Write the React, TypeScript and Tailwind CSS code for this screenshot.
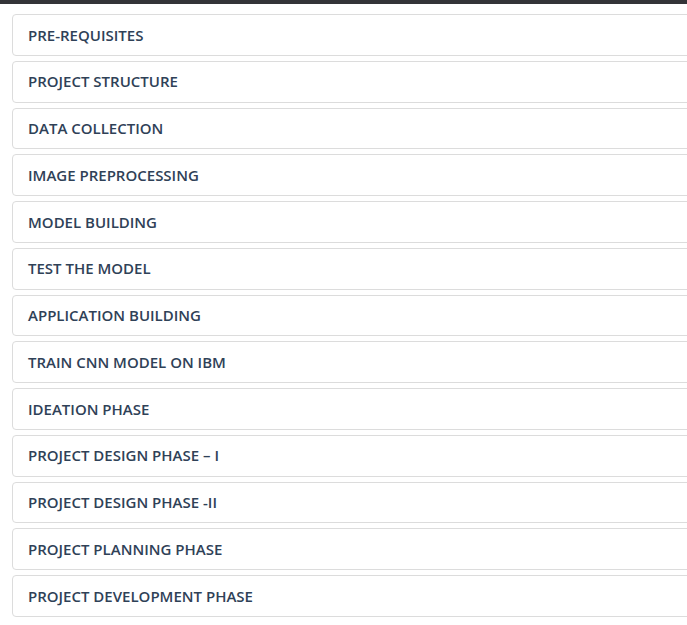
import React from 'react';

const sections = [
  'PRE-REQUISITES',
  'PROJECT STRUCTURE',
  'DATA COLLECTION',
  'IMAGE PREPROCESSING',
  'MODEL BUILDING',
  'TEST THE MODEL',
  'APPLICATION BUILDING',
  'TRAIN CNN MODEL ON IBM',
  'IDEATION PHASE',
  'PROJECT DESIGN PHASE – I',
  'PROJECT DESIGN PHASE -II',
  'PROJECT PLANNING PHASE',
  'PROJECT DEVELOPMENT PHASE',
];

export default function App() {
  return (
    <div className="w-[687px] h-[625px] overflow-hidden bg-white" style={{ fontFamily: '"Open Sans", sans-serif' }}>
      <div className="h-[4px] bg-[#333438]" />
      <div className="flex flex-col gap-[5px] pt-[10px] pl-[12px]">
        {sections.map((title) => (
          <div
            key={title}
            className="w-[700px] h-[41.75px] shrink-0 flex items-center pl-[15px] border border-[#dcdcdc] rounded-[4px] bg-white text-[15px] font-semibold text-[#2f4157]"
          >
            {title}
          </div>
        ))}
      </div>
    </div>
  );
}
